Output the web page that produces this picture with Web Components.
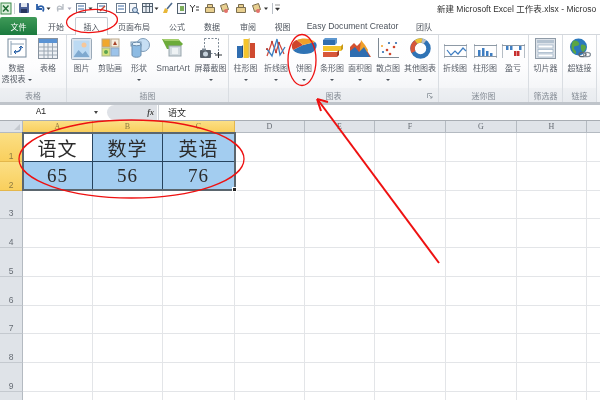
<!DOCTYPE html>
<html lang="zh">
<head>
<meta charset="utf-8">
<title>Excel</title>
<style>
html, body { margin: 0; padding: 0; background: #fff; }
body { width: 600px; height: 400px; overflow: hidden; font-family: "Liberation Sans", "Noto Sans CJK SC", sans-serif; }
svg { display: block; }
</style>
</head>
<body>
<excel-app>
  <title-bar slot="title">新建 Microsoft Excel 工作表.xlsx - Microso</title-bar>
  <tab-strip slot="tabs"></tab-strip>
  <excel-ribbon slot="ribbon">
    <ribbon-group label="表格" width="67">
      <ribbon-btn width="33" arrow="inline"><svg slot="icon" width="20" height="20" viewBox="0 0 20 20"><rect x="1" y="1" width="18" height="18" fill="#fff" stroke="#75899c"/><path d="M4 3v14M4 6h13" stroke="#8ea3b6" fill="none"/><path d="M8 14c4 0 6-2 6-5" stroke="#2a62a8" stroke-width="1.4" fill="none"/><path d="M12 10l2-2 2 2M9 12l-2 2 2 2" stroke="#2a62a8" fill="none"/></svg>数据<br>透视表</ribbon-btn>
      <ribbon-btn width="30"><svg slot="icon" width="20" height="21" viewBox="0 0 20 21"><rect x=".5" y=".5" width="19" height="20" fill="#eef1f5" stroke="#87929e"/><rect x="1" y="1" width="18" height="4" fill="#5a93d4"/><path d="M1 9h18M1 13h18M1 17h18M6 5v15M10 5v15M14.500 5v15" stroke="#9aa6b2"/></svg>表格</ribbon-btn>
    </ribbon-group>
    <ribbon-group label="插图" width="162">
      <ribbon-btn width="29"><svg slot="icon" width="21" height="22" viewBox="0 0 21 22"><rect x=".5" y=".5" width="20" height="21" rx="1" fill="#dfe6ee" stroke="#9aa9b8"/><rect x="2.500" y="2.500" width="16" height="17" fill="#bcdaf3"/><circle cx="13" cy="7" r="2.500" fill="#f6c79a"/><path d="M2.500 19l5-7 4 4 3-3 4 6z" fill="#7fa9cf"/></svg>图片</ribbon-btn>
      <ribbon-btn width="28"><svg slot="icon" width="20" height="20" viewBox="0 0 20 20"><rect x="2" y="1" width="8" height="8" fill="#f0a72e" stroke="#b9a88c"/><rect x="11" y="1" width="8" height="8" fill="#f6ede0" stroke="#b9a88c"/><path d="M13 7l2-4 2 4z" fill="#a9442a"/><rect x="2" y="10" width="8" height="8" fill="#d6e27f" stroke="#a9b58c"/><circle cx="6" cy="14" r="2" fill="#5da34e"/><rect x="11" y="10" width="8" height="8" fill="#9cc3ea" stroke="#8fa6bd"/></svg>剪贴画</ribbon-btn>
      <ribbon-btn width="30" arrow="below"><svg slot="icon" width="21" height="21" viewBox="0 0 21 21"><circle cx="14" cy="7" r="6.500" fill="#c6def3" stroke="#7f9cb8"/><rect x="2" y="4" width="10" height="4" fill="#d7e8f6" stroke="#7f9cb8"/><path d="M3 6h9v11c0 3-9 3-9 0z" fill="#8dbbe3" stroke="#6b8cab"/><ellipse cx="7.500" cy="6" rx="4.500" ry="1.800" fill="#e6f2fb" stroke="#6b8cab"/></svg>形状</ribbon-btn>
      <ribbon-btn width="38"><svg slot="icon" width="22" height="20" viewBox="0 0 22 20"><path d="M0 1h16l5 5-5 5H5z" fill="#6cab3a"/><path d="M0 1h16l2 2H3z" fill="#a3cd6c"/><rect x="7" y="8" width="12" height="10" fill="#d3dbe0" stroke="#98a5ad"/><rect x="10" y="10" width="6" height="6" fill="#eef2f4"/></svg><span class="latin">SmartArt</span></ribbon-btn>
      <ribbon-btn width="37" arrow="below"><svg slot="icon" width="24" height="21" viewBox="0 0 24 21"><rect x="5.500" y=".5" width="14" height="15" fill="none" stroke="#7c8894" stroke-dasharray="2 1.500"/><rect x="1" y="12" width="11" height="8" rx="1" fill="#56606a"/><circle cx="6.500" cy="16" r="2.500" fill="#c6d2dc"/><rect x="3" y="10.500" width="4" height="2" fill="#7c8894"/><path d="M16 17h7M19.500 14v6" stroke="#2e343a"/></svg>屏幕截图</ribbon-btn>
    </ribbon-group>
    <ribbon-group label="图表" width="210" launcher>
      <ribbon-btn width="33" arrow="below"><svg slot="icon" width="20" height="21" viewBox="0 0 20 21"><path d="M1 8h5v12H1z" fill="#2f6db0"/><path d="M6 8l1-1v12l-1 1z" fill="#1b4a80"/><path d="M7.500 1h5v19h-5z" fill="#f3c42d"/><path d="M12.500 1l1-1v19l-1 1z" fill="#c99a16"/><path d="M14 5h5v15h-5z" fill="#cf4a30"/></svg>柱形图</ribbon-btn>
      <ribbon-btn width="28" arrow="below"><svg slot="icon" width="20" height="20" viewBox="0 0 20 20"><path d="M1 18 6 4l4 10 3-9 5 11" fill="none" stroke="#d04b3e" stroke-width="1.300"/><path d="M1 11l5 7 5-17 3 16 5-8" fill="none" stroke="#3c7ec0" stroke-width="1.300"/><path d="M6 4v0M10 14v0M13 5v0M1 11v0" stroke="#b6372c" stroke-width="2.200" stroke-linecap="round"/></svg>折线图</ribbon-btn>
      <ribbon-btn width="28" arrow="below"><svg slot="icon" width="26" height="17" viewBox="0 0 26 17"><path d="M12 7 24 4c3 2 2 8-4 11-7 2-15 1-18-3z" fill="#2f73b5"/><path d="M12 7 2 12c-3-5 0-9 4-10z" fill="#d0452b"/><path d="M12 7 6 2C11-.5 20 0 24 4z" fill="#f0a02a"/></svg>饼图</ribbon-btn>
      <ribbon-btn width="28" arrow="below"><svg slot="icon" width="21" height="19" viewBox="0 0 21 19"><path d="M1 2h12v5H1z" fill="#2f6db0"/><path d="M1 2l2-2h12l-2 2zM13 2l2-2v5l-2 2z" fill="#5d97cf"/><path d="M1 8h18v5H1z" fill="#f3c42d"/><path d="M19 8l2-2v5l-2 2z" fill="#c99a16"/><path d="M1 14h14v5H1z" fill="#d7573a"/><path d="M15 14l2-2v5l-2 2z" fill="#a53d24"/></svg>条形图</ribbon-btn>
      <ribbon-btn width="28" arrow="below"><svg slot="icon" width="21" height="19" viewBox="0 0 21 19"><path d="M0 19V9l4-4 3 3 4-4 5 7 5 8z" fill="#d4512f"/><path d="M11 2l4 5 3 5-3 7H9z" fill="#f0a02a"/><path d="M0 19v-6l5-4 4 5 5-5 6 10z" fill="#2f6db0"/></svg>面积图</ribbon-btn>
      <ribbon-btn width="28" arrow="below"><svg slot="icon" width="21" height="20" viewBox="0 0 21 20"><path d="M.5 0v19.500H21" stroke="#7f8a94" fill="none"/><g fill="#d0452b"><circle cx="9" cy="12" r="1.300"/><circle cx="16" cy="9" r="1.300"/><circle cx="12" cy="16" r="1.300"/></g><g fill="#2f6db0"><circle cx="5" cy="14" r="1.100"/><circle cx="11" cy="5" r="1.100"/><circle cx="18" cy="5" r="1.100"/></g><circle cx="4" cy="8" r="1" fill="#f0a02a"/></svg>散点图</ribbon-btn>
      <ribbon-btn width="36" arrow="below"><svg slot="icon" width="21" height="21" viewBox="0 0 21 21"><circle cx="10.500" cy="10.500" r="8" fill="none" stroke="#2f73b5" stroke-width="4.500"/><path d="M3.500 14A8 8 0 0 1 6 4" fill="none" stroke="#d7573a" stroke-width="4.500"/><path d="M6 4a8 8 0 0 1 6-1.400" fill="none" stroke="#efc336" stroke-width="4.500"/><path d="M12 2.600A8 8 0 0 1 15 4" fill="none" stroke="#b8bfc6" stroke-width="4.500"/></svg>其他图表</ribbon-btn>
    </ribbon-group>
    <ribbon-group label="迷你图" width="90">
      <ribbon-btn width="32" small><svg slot="icon" width="23" height="14" viewBox="0 0 23 14"><path d="M.5 0v14M22.500 0v14" stroke="#b5bdc5"/><path d="M0 1.500h23M0 12.500h23" stroke="#8d99a5"/><path d="M3 6l4 5 4-4 3 3 5-6 3 3" fill="none" stroke="#3f7ec2" stroke-width="1.200"/></svg>折线图</ribbon-btn>
      <ribbon-btn width="28" small><svg slot="icon" width="23" height="14" viewBox="0 0 23 14"><path d="M.5 0v14M22.500 0v14" stroke="#b5bdc5"/><path d="M0 1.500h23M0 12.500h23" stroke="#8d99a5"/><path d="M4 6h2.500v6H4zM8 4h2.500v8H8zM12 7h2.500v5H12zM16 9h2.500v3H16z" fill="#3f7ec2"/></svg>柱形图</ribbon-btn>
      <ribbon-btn width="28" small><svg slot="icon" width="23" height="14" viewBox="0 0 23 14"><path d="M.5 0v14M22.500 0v14" stroke="#b5bdc5"/><path d="M0 1.500h23" stroke="#8d99a5"/><path d="M4 2h2.500v4H4zM8 2h2.500v4H8zM17 2h2.500v4H17z" fill="#3f7ec2"/><path d="M12 7h2.500v5H12zM15 7h2.500v5H15z" fill="#c72f2f"/></svg>盈亏</ribbon-btn>
    </ribbon-group>
    <ribbon-group label="筛选器" width="34">
      <ribbon-btn width="33"><svg slot="icon" width="21" height="21" viewBox="0 0 21 21"><rect x=".5" y=".5" width="20" height="20" fill="#dce2e9" stroke="#8f9ba7"/><rect x="2" y="2" width="17" height="3" fill="#b4c2d0"/><g fill="#fff" stroke="#9cb0c4" stroke-width=".7"><rect x="3" y="7" width="15" height="3"/><rect x="3" y="11.500" width="15" height="3"/><rect x="3" y="16" width="15" height="3"/></g></svg>切片器</ribbon-btn>
    </ribbon-group>
    <ribbon-group label="链接" width="34">
      <ribbon-btn width="33"><svg slot="icon" width="22" height="21" viewBox="0 0 22 21"><circle cx="9.500" cy="9" r="8.500" fill="#2a78bd"/><path d="M4 3c3-1 5 0 6 2s-1 3-3 3-3 2-1 4 1 4 0 4C3 14 1 8 4 3zM12 7c2-1 5 0 5 2s-2 5-3 5-3-4-2-7z" fill="#5aa544"/><ellipse cx="13.500" cy="16.500" rx="3.500" ry="2.200" fill="none" stroke="#5c6670" stroke-width="1.300"/><ellipse cx="18" cy="16.500" rx="3.500" ry="2.200" fill="none" stroke="#8a949e" stroke-width="1.300"/></svg>超链接</ribbon-btn>
    </ribbon-group>
  </excel-ribbon>
  <formula-bar slot="formula" cell="A1">语文</formula-bar>
  <sheet-grid slot="sheet"></sheet-grid>
  <svg slot="marks" width="600" height="400" viewBox="0 0 600 400" fill="none" stroke="#ee1111" stroke-width="1.300">
    <ellipse cx="92" cy="21" rx="25.500" ry="11.500" transform="rotate(-4 92 21)"/>
    <ellipse cx="302" cy="60" rx="14" ry="25.500"/>
    <ellipse cx="131.500" cy="159" rx="112.500" ry="39"/>
    <path d="M439 263 318 100" stroke-width="2"/>
    <path d="M317 99 328 102M317 99 321 111" stroke-width="2"/>
  </svg>
</excel-app>

<script>
const CJK = '"Liberation Sans", "Noto Sans CJK SC", sans-serif'

class ExcelApp extends HTMLElement {
  connectedCallback() {
    this.attachShadow({ mode: 'open' })
    this.shadowRoot.innerHTML = `
      <style>
        :host { display: block; position: relative; width: 600px; height: 400px; overflow: hidden; font-family: ${CJK}; }
        .chrome { display: grid; grid-template-rows: 17px 18px 67px 3px 15px 1px 1fr; height: 400px; filter: blur(.4px); }
        .rule { background: #bfc4ca; }
        .rule2 { background: #a8adb3; }
        .marks { position: absolute; left: 0; top: 0; }
      </style>
      <div class="chrome">
        <slot name="title"></slot>
        <slot name="tabs"></slot>
        <slot name="ribbon"></slot>
        <div class="rule"></div>
        <slot name="formula"></slot>
        <div class="rule2"></div>
        <slot name="sheet"></slot>
      </div>
      <div class="marks"><slot name="marks"></slot></div>
    `
  }
}

class TitleBar extends HTMLElement {
  connectedCallback() {
    this.attachShadow({ mode: 'open' })
    this.shadowRoot.innerHTML = `
      <style>
        :host { display: flex; align-items: center; height: 17px; background: #fff; overflow: hidden; }
        .qat { flex: 0 0 437px; }
        .name { flex: 1; font-size: 8.500px; color: #333; white-space: nowrap; padding-bottom: 1px; }
      </style>
      <div class="qat">
        <svg width="285" height="17" viewBox="0 0 285 17" style="display:block">
          <rect x="1" y="3" width="10" height="11" fill="#dcefdc" stroke="#3c8a4a"/><path d="M3 5.500 8.500 11.500M8.500 5.500 3 11.500" stroke="#1d6b32" stroke-width="1.500"/>
          <path d="M14.500 3v11" stroke="#c9ced4"/>
          <rect x="19" y="3" width="10" height="10" rx="1" fill="#4a5f96"/><rect x="21" y="3" width="6" height="4" fill="#e4e8f0"/><rect x="21" y="9" width="6" height="4" fill="#28365e"/>
          <path d="M37 4v5h5M37 8.500c3-4 8-3 6 3" fill="none" stroke="#2a5ea8" stroke-width="1.800"/>
          <path d="M46.500 7.500h4l-2 2.500z" fill="#333"/>
          <path d="M63 4v5h-5M63 8.500c-3-4-7-3-5 3" fill="none" stroke="#b6bcc3" stroke-width="1.300"/>
          <path d="M67.500 7.500h4l-2 2.500z" fill="#aab"/>
          <g fill="#fff" stroke="#6a7a8c"><rect x="76.500" y="3.500" width="9" height="9"/><rect x="97.500" y="3.500" width="9" height="9"/><rect x="116.500" y="3.500" width="9" height="9"/></g>
          <path d="M78 6h6M78 9h6M99 6h6M118 6h6M118 9h6" stroke="#3f6ca8"/>
          <path d="M88.500 7.500h4l-2 2.500z" fill="#333"/>
          <path d="M100 11l5-5" stroke="#c2452d" stroke-width="1.500"/>
          <rect x="129.500" y="3.500" width="7" height="9" fill="#f5f7fa" stroke="#6a7a8c"/><circle cx="135" cy="10" r="2.500" fill="#cfe0f2" stroke="#4e6a8c"/><path d="M137 12l2 2" stroke="#4e6a8c" stroke-width="1.300"/>
          <rect x="142.500" y="3.500" width="10" height="9" fill="#e8edf3" stroke="#53616f"/><path d="M142 6.500h11M146 4v8M149.500 4v8" stroke="#53616f"/>
          <path d="M154.500 7.500h4l-2 2.500z" fill="#333"/>
          <path d="M172 3l-5 6" stroke="#4e6a8c" stroke-width="1.600"/><path d="M163 13l2-5 3 2-1 3z" fill="#e8b739"/>
          <rect x="177.500" y="3.500" width="8" height="10" fill="#f5f7fa" stroke="#53616f"/><rect x="180" y="6" width="4" height="5" fill="#7cae5a"/>
          <path d="M190 5l2.500 3 2.500-3M192.500 8v4M196 7h3M196 10h3" fill="none" stroke="#333"/>
          <g fill="#e8cf8f" stroke="#7a6d4e"><path d="M205.500 7.500h9v5h-9z"/><path d="M207.500 4.500h5v3h-5z"/><path d="M220.500 5.500l6-2 2 6-6 2z"/><path d="M236.500 7.500h9v5h-9z"/><path d="M238.500 4.500h5v3h-5z"/><path d="M252.500 5.500l6-2 2 6-6 2z"/></g>
          <g fill="#e3726a"><circle cx="226" cy="11" r="2"/><circle cx="258" cy="11" r="2"/></g>
          <path d="M264 7.500h4l-2 2.500z" fill="#333"/>
          <path d="M272.500 3v11" stroke="#b9bfc6"/>
          <path d="M275 5h5M275.500 8h4l-2 2.500z" fill="#333" stroke="#333" stroke-width=".5"/>
        </svg>
      </div>
      <div class="name"><slot></slot></div>
    `
  }
}

class TabStrip extends HTMLElement {
  connectedCallback() {
    const tabs = [['开始', 38], ['插入', 33, 'on'], ['页面布局', 52], ['公式', 34], ['数据', 36], ['审阅', 36], ['视图', 33], ['Easy Document Creator', 107], ['团队', 36]]
    this.attachShadow({ mode: 'open' })
    this.shadowRoot.innerHTML = `
      <style>
        :host { display: flex; height: 18px; background: #fff; box-shadow: inset 0 -1px 0 #d3d7dc; font-size: 8px; color: #4c535c; }
        .file { width: 37px; background: linear-gradient(#3f9a58, #1b7a3e); color: #fff; display: flex; align-items: center; justify-content: center; border-radius: 2px 2px 0 0; }
        .tab { display: flex; align-items: center; justify-content: center; white-space: nowrap; box-sizing: border-box; }
        .tab.on { background: #fff; border: 1px solid #c6cbd1; border-bottom: 0; border-radius: 2px 2px 0 0; }
        .latin { font-size: 8.600px; }
      </style>
      <div class="file">文件</div>
      ${tabs.map(t => `<div class="tab ${t[2] || ''} ${t[1] > 100 ? 'latin' : ''}" style="width:${t[1]}px">${t[0]}</div>`).join('')}
    `
  }
}

class ExcelRibbon extends HTMLElement {
  connectedCallback() {
    this.attachShadow({ mode: 'open' })
    this.shadowRoot.innerHTML = `
      <style>
        :host { display: flex; height: 67px; background: linear-gradient(#ffffff 0, #fdfdfe 45%, #eff1f4 100%); }
      </style>
      <slot></slot>
    `
  }
}

class RibbonGroup extends HTMLElement {
  connectedCallback() {
    const launcher = this.hasAttribute('launcher')
      ? `<svg class="launch" width="6" height="6" viewBox="0 0 6 6"><path d="M.5 5V.5H5M2 2l3 3M5 3v2H3" fill="none" stroke="#8a929b" stroke-width=".8"/></svg>`
      : ''
    this.attachShadow({ mode: 'open' })
    this.shadowRoot.innerHTML = `
      <style>
        :host { display: flex; flex-direction: column; box-sizing: border-box; height: 67px; flex: none; width: ${this.getAttribute('width')}px; border-right: 1px solid #d9dde2; }
        .body { flex: 1; display: flex; padding-top: 3px; }
        .label { position: relative; height: 14px; display: flex; align-items: center; justify-content: center; font-size: 8px; color: #858c95; background: linear-gradient(#eef0f3, #e8ebef); }
        .launch { position: absolute; right: 5px; top: 5px; }
      </style>
      <div class="body"><slot></slot></div>
      <div class="label">${this.getAttribute('label')}${launcher}</div>
    `
  }
}

class RibbonBtn extends HTMLElement {
  connectedCallback() {
    const arrow = this.getAttribute('arrow')
    const tri = '<span class="tri"></span>'
    this.attachShadow({ mode: 'open' })
    this.shadowRoot.innerHTML = `
      <style>
        :host { display: flex; flex-direction: column; align-items: center; flex: none; width: ${this.getAttribute('width')}px; font-size: 8px; line-height: 11px; color: #585e67; text-align: center; white-space: nowrap; }
        .icon { height: 25px; display: flex; align-items: ${this.hasAttribute('small') ? 'center' : 'flex-start'}; justify-content: center; }
        .tri { display: inline-block; border: 2px solid transparent; border-top: 2px solid #4a5059; border-bottom: 0; margin-left: 2px; vertical-align: middle; }
        .below { height: 11px; display: flex; align-items: center; justify-content: center; }
        ::slotted(.latin) { font-size: 8.500px; }
      </style>
      <div class="icon"><slot name="icon"></slot></div>
      <div class="text"><slot></slot>${arrow === 'inline' ? tri : ''}</div>
      ${arrow === 'below' ? `<div class="below">${tri.replace('class="tri"', 'class="tri" style="margin:0"')}</div>` : ''}
    `
  }
}

class FormulaBar extends HTMLElement {
  connectedCallback() {
    this.attachShadow({ mode: 'open' })
    this.shadowRoot.innerHTML = `
      <style>
        :host { display: flex; height: 15px; background: #fff; font-size: 9px; color: #222; }
        .name { width: 94px; padding-right: 12px; box-sizing: border-box; text-align: center; line-height: 15px; font-family: "Liberation Mono", monospace; font-size: 8.500px; }
        .drop { width: 13px; display: flex; align-items: center; }
        .drop i { border: 2.500px solid transparent; border-top: 3px solid #444; border-bottom: 0; }
        .btns { width: 50px; background: #dfe2e7; border-radius: 8px 0 0 8px; display: flex; align-items: center; justify-content: flex-end; padding-right: 3px; box-sizing: border-box; }
        .fx { font: italic bold 8px "Liberation Serif", serif; color: #444; }
        .val { padding-left: 9px; line-height: 15px; border-left: 1px solid #cdd1d6; margin-left: 1px; font-family: "Noto Sans CJK SC", sans-serif; }
      </style>
      <div class="name">${this.getAttribute('cell')}</div>
      <div class="drop"><i></i></div>
      <div class="btns"><span class="fx">fx</span></div>
      <div class="val"><slot></slot></div>
    `
  }
}

class SheetGrid extends HTMLElement {
  connectedCallback() {
    const cols = ['A', 'B', 'C', 'D', 'E', 'F', 'G', 'H', '']
    const data = { '1,0': '语文', '1,1': '数学', '1,2': '英语', '2,0': '65', '2,1': '56', '2,2': '76' }
    let html = '<div class="corner" style="grid-area:1/1"><i></i></div>'
    cols.forEach((c, i) => { html += `<div class="ch ${i < 3 ? 'sel' : ''}" style="grid-area:1/${i + 2}">${c}</div>` })
    for (let r = 1; r <= 10; r++) {
      html += `<div class="rh ${r < 3 ? 'sel' : ''}" style="grid-area:${r + 1}/1">${r < 10 ? r : ''}</div>`
      cols.forEach((c, i) => {
        const txt = data[r + ',' + i]
        const table = r < 3 && i < 3
        const fill = table && !(r === 1 && i === 0) ? 'fill' : ''
        html += `<div class="cell ${table ? 'tb' : ''} ${fill}" style="grid-area:${r + 1}/${i + 2}">${txt || ''}</div>`
      })
    }
    this.attachShadow({ mode: 'open' })
    this.shadowRoot.innerHTML = `
      <style>
        :host { display: block; overflow: hidden; background: #fff; }
        .grid { display: grid; grid-template-columns: 23px 70px 70px 72px 70px 70px 71px 71px 70px 70px; grid-template-rows: 12px repeat(10, 28.750px); }
        .corner { background: #dfe3e8; border-right: 1px solid #b4bac1; border-bottom: 1px solid #b4bac1; position: relative; }
        .corner i { position: absolute; right: 2px; bottom: 2px; border-left: 6px solid transparent; border-bottom: 6px solid #c5cad0; }
        .ch { background: #dfe3e8; border-right: 1px solid #b4bac1; border-bottom: 1px solid #b4bac1; font-size: 8px; color: #666c74; text-align: center; line-height: 12px; box-sizing: border-box; font-family: "Liberation Serif", serif; }
        .rh { background: #dfe3e8; border-right: 1px solid #b4bac1; border-bottom: 1px solid #c4c9cf; font-size: 8.500px; color: #666c74; text-align: center; display: flex; align-items: flex-end; justify-content: center; box-sizing: border-box; font-family: "Liberation Sans", sans-serif; }
        .sel { background: linear-gradient(#fbdf85, #f9cf5d); color: #8d7a40; border-color: #e4b74b; }
        .cell { border-right: 1px solid #e3e5e8; border-bottom: 1px solid #e3e5e8; box-sizing: border-box; }
        .tb { border-color: #27445f; display: flex; align-items: center; justify-content: center; font: 19px "Liberation Serif", "Noto Sans CJK SC", serif; color: #2b2b2b; letter-spacing: 1px; padding-top: 1px; }
        .fill { background: #a3cdf0; }
        .range { grid-column: 2 / 5; grid-row: 2 / 4; border: 2px solid #5b666e; box-sizing: border-box; position: relative; margin: -1px -1px 0 -1px; }
        .range i { position: absolute; right: -3px; bottom: -3px; width: 3px; height: 3px; background: #222; border: 1px solid #fff; }
      </style>
      <div class="grid">${html}<div class="range"><i></i></div></div>
    `
  }
}

customElements.define('excel-app', ExcelApp)
customElements.define('title-bar', TitleBar)
customElements.define('tab-strip', TabStrip)
customElements.define('excel-ribbon', ExcelRibbon)
customElements.define('ribbon-group', RibbonGroup)
customElements.define('ribbon-btn', RibbonBtn)
customElements.define('formula-bar', FormulaBar)
customElements.define('sheet-grid', SheetGrid)
</script>
</body>
</html>
